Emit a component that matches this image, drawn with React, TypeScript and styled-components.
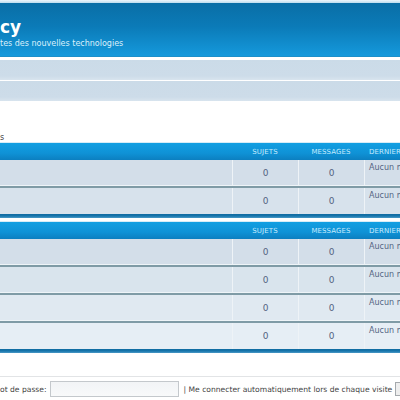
import React from "react";
import styled, { createGlobalStyle } from "styled-components";

const Global = createGlobalStyle`
  html, body { margin: 0; padding: 0; background: #ffffff; }
  body { width: 400px; height: 400px; overflow: hidden; font-family: "DejaVu Sans", Verdana, sans-serif; }
`;

const Page = styled.div`
  width: 400px;
  display: flex;
  flex-direction: column;
`;

const TopStrip = styled.div`
  height: 3px;
  background: linear-gradient(#eef6fb, #bcdcee);
`;

const Header = styled.header`
  height: 54px;
  box-sizing: border-box;
  padding-top: 14px;
  background: linear-gradient(#0a6ea6 0%, #0b7bb8 45%, #1599dc 100%);
  border-bottom: 1px solid #1c8fc9;
  display: flex;
  flex-direction: column;
`;

const Title = styled.h1`
  margin: 0;
  font-size: 17px;
  line-height: 20px;
  font-weight: bold;
  color: #ffffff;
`;

const Subtitle = styled.p`
  margin: 2px 0 0;
  font-size: 8px;
  line-height: 10px;
  color: #dcf0fb;
`;

const NavBands = styled.div`
  margin-top: 3px;
  display: flex;
  flex-direction: column;
  gap: 1px;
`;

const NavBand = styled.div`
  height: 20px;
  background: linear-gradient(#cbdbe8 0%, #cddce9 80%, #d8e4ee 100%);
`;

const Crumb = styled.div`
  height: 41px;
  display: flex;
  align-items: flex-end;
  font-size: 8px;
  color: #444;
  box-sizing: border-box;
`;

const Forum = styled.section<{ $gap: number }>`
  margin-top: ${(p) => p.$gap}px;
  display: flex;
  flex-direction: column;
  border-top: 1px solid #d6ecf7;
`;

const Cols = styled.div`
  display: grid;
  grid-template-columns: 232px 66px 66px 1fr;
`;

const HeadRow = styled(Cols)`
  height: 17px;
  align-items: center;
  background: linear-gradient(#129fe2 0%, #0f92d6 60%, #0c7fc0 100%);
  font-size: 7px;
  color: #c6ebfd;
  letter-spacing: 0.1px;
  white-space: nowrap;
  overflow: hidden;
`;

const HeadCell = styled.div<{ $left?: boolean }>`
  text-align: ${(p) => (p.$left ? "left" : "center")};
  padding-left: ${(p) => (p.$left ? "5px" : "0")};
`;

const Row = styled(Cols)<{ $bg: string; $last?: boolean }>`
  height: ${(p) => (p.$last ? 26 : 28)}px;
  box-sizing: border-box;
  background: ${(p) => p.$bg};
  border-bottom: ${(p) => (p.$last ? "none" : "2px solid #7f9ba6")};
  box-shadow: ${(p) => (p.$last ? "none" : "inset 0 -1px 0 #eef4f8")};
`;

const Cell = styled.div<{ $sep?: boolean }>`
  border-left: ${(p) => (p.$sep ? "1px solid #eef3f7" : "none")};
`;

const Num = styled(Cell)`
  display: flex;
  align-items: center;
  justify-content: center;
  font-size: 9px;
  color: #536482;
`;

const Last = styled(Cell)`
  font-size: 8px;
  color: #536482;
  padding: 3px 0 0 4px;
  white-space: nowrap;
  overflow: hidden;
`;

const BottomBorder = styled.div`
  height: 4px;
  background: linear-gradient(#0f6aa0 0%, #1675ac 50%, #4c9ac6 100%);
`;

const Login = styled.div`
  margin-top: 23px;
  border-top: 1px solid #e2e4e6;
  height: 24px;
  display: flex;
  align-items: center;
  font-size: 7.6px;
  color: #444;
  white-space: nowrap;
`;

const Input = styled.div`
  width: 127px;
  height: 14px;
  margin: 0 5px 0 3px;
  border: 1px solid #c4c8cc;
  background: linear-gradient(#f2f4f6, #f8f9fa);
  flex-shrink: 0;
`;

const Check = styled.div`
  width: 10px;
  height: 12px;
  margin-left: 3px;
  border: 1px solid #a5a9ad;
  background: #eeeeee;
  flex-shrink: 0;
`;

const rows1 = ["#d3dee9", "#d7e2ec"];
const rows2 = ["#d3dee9", "#d9e4ed", "#e0e9f1", "#e6eef5"];

function Table({ rows, gap }: { rows: string[]; gap: number }) {
  return (
    <Forum $gap={gap}>
      <HeadRow>
        <HeadCell $left />
        <HeadCell>SUJETS</HeadCell>
        <HeadCell>MESSAGES</HeadCell>
        <HeadCell $left>DERNIER MESSAGE</HeadCell>
      </HeadRow>
      {rows.map((bg, i) => (
        <Row key={i} $bg={bg} $last={i === rows.length - 1}>
          <Cell />
          <Num $sep>0</Num>
          <Num $sep>0</Num>
          <Last $sep>Aucun message</Last>
        </Row>
      ))}
      <BottomBorder />
    </Forum>
  );
}

export default function App() {
  return (
    <Page>
      <Global />
      <TopStrip />
      <Header>
        <Title>cy</Title>
        <Subtitle>tes des nouvelles technologies</Subtitle>
      </Header>
      <NavBands>
        <NavBand />
        <NavBand />
      </NavBands>
      <Crumb>s</Crumb>
      <Table rows={rows1} gap={0} />
      <Table rows={rows2} gap={3} />
      <Login>
        ot de passe:
        <Input />| Me connecter automatiquement lors de chaque visite
        <Check />
      </Login>
    </Page>
  );
}
